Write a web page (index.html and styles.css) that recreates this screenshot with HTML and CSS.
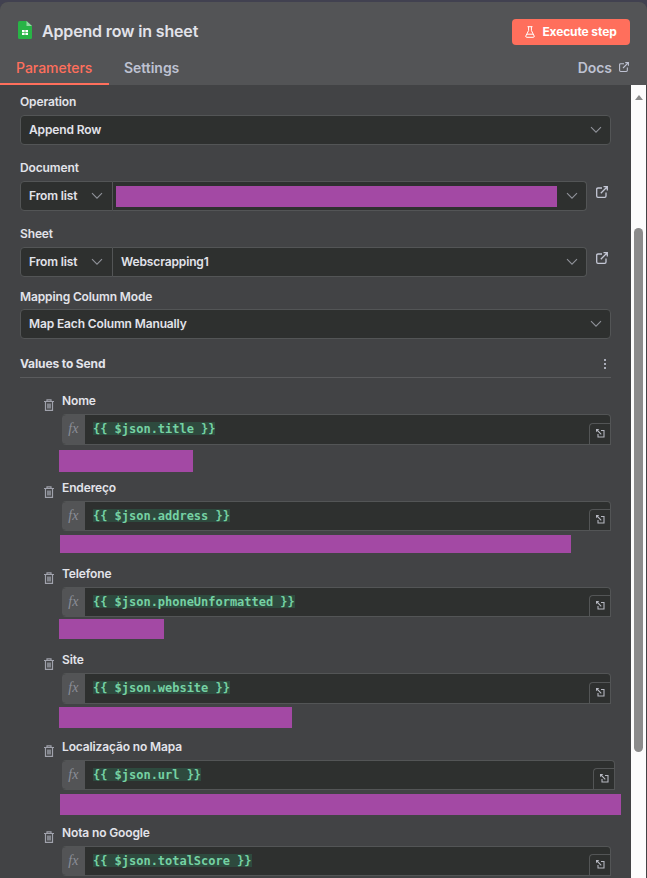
FILE: index.html
```html
<!DOCTYPE html>
<html lang="pt-BR">
<head>
<meta charset="utf-8">
<title>Append row in sheet</title>
<link rel="stylesheet" href="styles.css">
</head>
<body>
<svg class="defs" width="0" height="0">
  <symbol id="chevron" viewBox="0 0 12 8"><path d="M1 1.2 6 6.2 11 1.2" fill="none" stroke="currentColor" stroke-width="1.1"/></symbol>
  <symbol id="external" viewBox="0 0 12 12"><path d="M6 2H2Q.7 2 .7 3.300V10Q.7 11.300 2 11.300H8.700Q10 11.300 10 10V6.500M7.500.7H11.300V4.500M11 1 4.800 7.200" fill="none" stroke="currentColor" stroke-width="1.3"/></symbol>
  <symbol id="trash" viewBox="0 0 10 12"><path d="M0 2.500H10M3 2.300V.8H7V2.300M1.500 2.500V11.300H8.500V2.500" fill="none" stroke="currentColor" stroke-width="1.200"/><path d="M3 4.500H7V9.500H3Z" fill="currentColor" opacity=".7"/></symbol>
  <symbol id="expand" viewBox="0 0 9 9"><path d="M5 1.500H8V8H2V5M1 1 5.300 5.300" fill="none" stroke="currentColor" stroke-width="1.100"/><path d="M0 0H3.300L0 3.300Z" fill="currentColor"/></symbol>
</svg>
<main class="panel">
  <header class="header">
    <div class="title-row">
      <svg class="sheet-icon" viewBox="0 0 14 18"><path d="M1.500 0H8.500L14 5V16.500Q14 18 12.500 18H1.500Q0 18 0 16.500V1.500Q0 0 1.500 0Z" fill="#28b446"/><path d="M8.500 0 14 5H8.500Z" fill="#93d9a2"/><path d="M4 9H10V14H4Z" fill="#fff"/><path d="M4 11.500H10M7 9V14" stroke="#28b446" stroke-width=".7"/></svg>
      <h1 class="title">Append row in sheet</h1>
      <button class="execute"><svg class="flask" viewBox="0 0 10 12"><path d="M2.500.7H7.500M3.600.7V4.500L.8 10Q.5 11.300 1.700 11.300H8.300Q9.500 11.300 9.200 10L6.400 4.500V.7M2 8.200H8" fill="none" stroke="currentColor" stroke-width="1"/></svg><span>Execute step</span></button>
    </div>
    <nav class="tabs">
      <a class="tab active">Parameters</a>
      <a class="tab settings">Settings</a>
      <a class="docs"><span>Docs</span><svg class="docs-icon"><use href="#external"/></svg></a>
    </nav>
  </header>
  <div class="body">
    <div class="content">
      <section class="field">
        <label class="label">Operation</label>
        <div class="select"><span>Append Row</span><svg class="chevron"><use href="#chevron"/></svg></div>
      </section>
      <section class="field">
        <label class="label">Document</label>
        <div class="locator">
          <div class="select mode"><span>From list</span><svg class="chevron"><use href="#chevron"/></svg></div>
          <div class="select value masked"><span class="mask"></span><svg class="chevron"><use href="#chevron"/></svg></div>
          <svg class="open"><use href="#external"/></svg>
        </div>
      </section>
      <section class="field sheet">
        <label class="label">Sheet</label>
        <div class="locator">
          <div class="select mode"><span>From list</span><svg class="chevron"><use href="#chevron"/></svg></div>
          <div class="select value"><span>Webscrapping1</span><svg class="chevron"><use href="#chevron"/></svg></div>
          <svg class="open"><use href="#external"/></svg>
        </div>
      </section>
      <section class="field mapping">
        <label class="label">Mapping Column Mode</label>
        <div class="select"><span>Map Each Column Manually</span><svg class="chevron"><use href="#chevron"/></svg></div>
      </section>
      <div class="section-head"><span>Values to Send</span><svg class="dots" viewBox="0 0 2 10"><path d="M0 0H2V2H0ZM0 4H2V6H0ZM0 8H2V10H0Z" fill="currentColor"/></svg></div>
      <div class="rows">
        <section class="row nome">
          <svg class="trash"><use href="#trash"/></svg>
          <div class="entry"><label class="label">Nome</label>
            <div class="expression"><i class="fx">fx</i><div class="code"><code>{{ $json.title }}</code></div><span class="expand"><svg><use href="#expand"/></svg></span></div>
            <div class="result"></div></div>
        </section>
        <section class="row endereco">
          <svg class="trash"><use href="#trash"/></svg>
          <div class="entry"><label class="label">Endereço</label>
            <div class="expression"><i class="fx">fx</i><div class="code"><code>{{ $json.address }}</code></div><span class="expand"><svg><use href="#expand"/></svg></span></div>
            <div class="result"></div></div>
        </section>
        <section class="row telefone">
          <svg class="trash"><use href="#trash"/></svg>
          <div class="entry"><label class="label">Telefone</label>
            <div class="expression"><i class="fx">fx</i><div class="code"><code>{{ $json.phoneUnformatted }}</code></div><span class="expand"><svg><use href="#expand"/></svg></span></div>
            <div class="result"></div></div>
        </section>
        <section class="row site">
          <svg class="trash"><use href="#trash"/></svg>
          <div class="entry"><label class="label">Site</label>
            <div class="expression"><i class="fx">fx</i><div class="code"><code>{{ $json.website }}</code></div><span class="expand"><svg><use href="#expand"/></svg></span></div>
            <div class="result"></div></div>
        </section>
        <section class="row mapa">
          <svg class="trash"><use href="#trash"/></svg>
          <div class="entry"><label class="label">Localização no Mapa</label>
            <div class="expression"><i class="fx">fx</i><div class="code"><code>{{ $json.url }}</code></div><span class="expand"><svg><use href="#expand"/></svg></span></div>
            <div class="result"></div></div>
        </section>
        <section class="row nota">
          <svg class="trash"><use href="#trash"/></svg>
          <div class="entry"><label class="label">Nota no Google</label>
            <div class="expression"><i class="fx">fx</i><div class="code"><code>{{ $json.totalScore }}</code></div><span class="expand"><svg><use href="#expand"/></svg></span></div></div>
        </section>
      </div>
    </div>
    <div class="scrollbar"><span class="arrow"></span><span class="thumb"></span></div>
  </div>
</main>
</body>
</html>
```
FILE: styles.css
```css
* { box-sizing: border-box; }
body { margin: 0; height: 878px; overflow: hidden; padding-top: 2px; background: #414150; color: #e2e3ea; font: 600 12px/16px Inter, sans-serif; letter-spacing: -.13px; }
.defs { display: block; height: 0; }
.panel { height: 876px; display: flex; flex-direction: column; background: #424345; border-radius: 8px 8px 0 0; overflow: hidden; }
.header { height: 83px; flex: none; display: flex; flex-direction: column; background: #535456; }
.title-row { height: 53px; padding: 7px 17px 0 18px; display: flex; align-items: center; }
.sheet-icon { width: 14px; height: 18px; margin-top: -5px; }
.title { margin: -2px auto 0 10px; font-size: 16px; line-height: 20px; font-weight: 600; letter-spacing: -.15px; }
.execute { width: 118px; height: 26px; display: flex; align-items: center; justify-content: center; gap: 7px; padding: 0; border: 0; border-radius: 4px; background: #ff6f5c; color: #fff; font: 700 12px/16px Inter, sans-serif; letter-spacing: -.12px; }
.flask { width: 10px; height: 12px; }
.tabs { flex: 1; display: flex; font-size: 14px; line-height: 18px; color: #bec2d2; letter-spacing: -.03px; }
.tab { padding-top: 4px; height: 30px; }
.active { width: 109px; padding-left: 16px; color: #ff6f5c; font-weight: 550; border-bottom: 2px solid #ff6f5c; }
.settings { padding-left: 15px; }
.docs { margin-left: auto; padding: 4px 18px 0 0; display: flex; gap: 7px; }
.docs-icon { width: 10px; height: 10px; margin-top: 3px; }
.body { flex: 1; min-height: 0; display: flex; padding-right: 1px; }
.content { flex: 1; padding: 9px 20px 0; overflow: hidden; }
.field { height: 66px; }
.field.sheet, .field.mapping { height: 62px; }
.label { display: block; height: 16px; white-space: nowrap; }
.field .label { margin-bottom: 5px; }
.mapping .label { line-height: 18px; }
.select { height: 30px; display: flex; align-items: center; justify-content: space-between; padding: 0 8px; background: #2e302f; border: 1px solid #535556; border-radius: 4px; }
.chevron { width: 12px; height: 8px; color: #90929a; }
.locator { display: flex; }
.mode { width: 93px; padding-right: 9px; border-radius: 4px 0 0 4px; }
.value { width: 474px; border-left: 0; border-radius: 0 4px 4px 0; }
.masked { padding-left: 3px; }
.mask { width: 441px; height: 21px; background: #a349a4; }
.open { width: 12px; height: 12px; margin: 5px 0 0 9px; color: #c4c7d5; }
.section-head { height: 28px; padding: 6px 5px 0 0; display: flex; justify-content: space-between; border-bottom: 1px solid #5a5b5d; font-weight: 650; }
.dots { width: 2px; height: 10px; margin-top: 3px; color: #a9acb8; }
.rows { padding: 15px 0 0 24px; }
.row { height: 86px; display: flex; gap: 8px; }
.row.nome, .row.site { height: 87px; }
.trash { width: 10px; height: 12px; margin-top: 6px; color: #a0a2ac; flex: none; }
.entry { flex: 1; min-width: 0; }
.expression { width: 549px; height: 30px; margin-top: 5px; display: flex; background: #2e302f; border: 1px solid #535556; border-left: 0; border-radius: 4px 4px 0 4px; overflow: hidden; }
.nome .expression, .site .expression { height: 31px; }
.mapa .expression { width: 553px; }
.fx { width: 23px; flex: none; background: #535456; color: #8b8e98; font: italic 14px/27px "Liberation Serif", serif; text-align: center; letter-spacing: .3px; }
.code { flex: 1; padding: 7px 0 0 8px; }
code { display: block; width: max-content; height: 13px; background: #2e4a3e; color: #75d1a3; font: 700 12px/15px "DejaVu Sans Mono", monospace; letter-spacing: -.02px; white-space: pre; }
.expand { width: 21px; height: 21px; align-self: flex-end; display: flex; align-items: center; justify-content: center; padding: 0 0 1px 1px; border: 1px solid #535556; border-width: 1px 0 0 1px; border-radius: 4px 0 0 0; }
.expand svg { width: 9px; height: 9px; color: #b5b7c0; }
.result { height: 22px; width: 134px; margin: 5px 0 0 -3px; background: #a349a4; }
.endereco .result { width: 511px; height: 18px; margin: 4px 0 0 -2px; }
.telefone .result { width: 105px; height: 20px; margin-top: 2px; }
.site .result { width: 233px; height: 21px; margin-top: 3px; }
.mapa .result { width: 561px; height: 21px; margin: 4px 0 0 -2px; }
.scrollbar { width: 15px; display: flex; flex-direction: column; align-items: center; background: #fcfcfc; }
.arrow { margin-top: 10px; border: 4px solid transparent; border-top: 0; border-bottom: 5px solid #8b8b8b; }
.thumb { width: 9px; height: 524px; margin-top: 128px; border-radius: 5px; background: #8b8b8b; }
```
